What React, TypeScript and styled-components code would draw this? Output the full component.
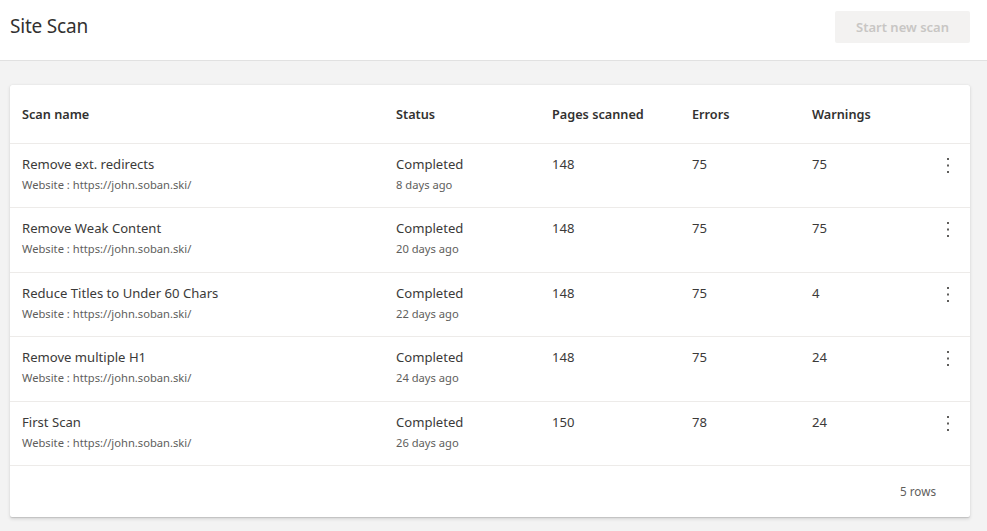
import React from 'react';
import styled, { createGlobalStyle } from 'styled-components';

const GlobalStyle = createGlobalStyle`
    html, body {
        margin: 0;
        padding: 0;
        background: #f3f3f3;
        font-family: "Noto Sans", "Open Sans", sans-serif;
        color: #323130;
    }
`;

const Page = styled.div`
    width: 987px;
    height: 531px;
    display: flex;
    flex-direction: column;
    background: #f3f3f3;
    overflow: hidden;
`;

const TopBar = styled.header`
    height: 61px;
    box-sizing: border-box;
    display: flex;
    align-items: center;
    justify-content: space-between;
    padding: 0 17px 0 10px;
    background: #ffffff;
    border-bottom: 1px solid #e1e1e1;
`;

const Title = styled.h1`
    margin: 0 0 8px;
    font-size: 19px;
    font-weight: 400;
    color: #323130;
    letter-spacing: -0.2px;
`;

const PrimaryButton = styled.button`
    width: 135px;
    height: 32px;
    margin-bottom: 6px;
    border: none;
    border-radius: 2px;
    background: #f3f2f1;
    color: #c8c6c4;
    font-family: inherit;
    font-size: 13px;
    font-weight: 600;
    cursor: default;
`;

const Body = styled.main`
    flex: 1;
    padding: 24px 17px 0 10px;
`;

const Card = styled.section`
    background: #ffffff;
    border-radius: 2px;
    box-shadow: 0 1.6px 3.6px rgba(0, 0, 0, 0.13), 0 0.3px 0.9px rgba(0, 0, 0, 0.11);
`;

const Row = styled.div<{ $header?: boolean }>`
    display: grid;
    grid-template-columns: 374px 156px 140px 120px 1fr 44px;
    height: ${p => (p.$header ? '59px' : '64.4px')};
    box-sizing: border-box;
    padding-left: 12px;
    align-items: ${p => (p.$header ? 'center' : 'start')};
    border-bottom: 1px solid #edebe9;
`;

const HeadCell = styled.div`
    font-size: 12.7px;
    font-weight: 600;
    color: #323130;
`;

const Cell = styled.div`
    padding-top: 11px;
    font-size: 13.1px;
    line-height: 19px;
    color: #3b3a39;
`;

const Sub = styled.div`
    font-size: 11.2px;
    line-height: 21px;
    color: #605e5c;
`;

const Kebab = styled.button`
    justify-self: center;
    margin-top: 9px;
    width: 20px;
    height: 24px;
    border: none;
    background: transparent;
    display: flex;
    align-items: center;
    justify-content: center;
    padding: 0;
    color: #605e5c;
`;

const Footer = styled.div`
    height: 51px;
    display: flex;
    align-items: center;
    justify-content: flex-end;
    padding-right: 34px;
    font-size: 11.7px;
    color: #605e5c;
`;

interface Scan {
    name: string;
    site: string;
    status: string;
    when: string;
    pages: number;
    errors: number;
    warnings: number;
}

const scans: Scan[] = [
    { name: 'Remove ext. redirects', site: 'https://john.soban.ski/', status: 'Completed', when: '8 days ago', pages: 148, errors: 75, warnings: 75 },
    { name: 'Remove Weak Content', site: 'https://john.soban.ski/', status: 'Completed', when: '20 days ago', pages: 148, errors: 75, warnings: 75 },
    { name: 'Reduce Titles to Under 60 Chars', site: 'https://john.soban.ski/', status: 'Completed', when: '22 days ago', pages: 148, errors: 75, warnings: 4 },
    { name: 'Remove multiple H1', site: 'https://john.soban.ski/', status: 'Completed', when: '24 days ago', pages: 148, errors: 75, warnings: 24 },
    { name: 'First Scan', site: 'https://john.soban.ski/', status: 'Completed', when: '26 days ago', pages: 150, errors: 78, warnings: 24 }
];

const MoreIcon = () => (
    <svg width="4" height="16" viewBox="0 0 4 16" fill="currentColor">
        <rect x="1" y="1" width="2" height="2" />
        <rect x="1" y="7.5" width="2" height="2" />
        <rect x="1" y="14" width="2" height="2" />
    </svg>
);

export default function App() {
    return (
        <Page>
            <GlobalStyle />
            <TopBar>
                <Title>Site Scan</Title>
                <PrimaryButton disabled>Start new scan</PrimaryButton>
            </TopBar>
            <Body>
                <Card>
                    <Row $header>
                        <HeadCell>Scan name</HeadCell>
                        <HeadCell>Status</HeadCell>
                        <HeadCell>Pages scanned</HeadCell>
                        <HeadCell>Errors</HeadCell>
                        <HeadCell>Warnings</HeadCell>
                        <div />
                    </Row>
                    {scans.map((s, i) => (
                        <Row key={i}>
                            <Cell>
                                {s.name}
                                <Sub>Website : {s.site}</Sub>
                            </Cell>
                            <Cell>
                                {s.status}
                                <Sub>{s.when}</Sub>
                            </Cell>
                            <Cell>{s.pages}</Cell>
                            <Cell>{s.errors}</Cell>
                            <Cell>{s.warnings}</Cell>
                            <Kebab aria-label="More actions"><MoreIcon /></Kebab>
                        </Row>
                    ))}
                    <Footer>5 rows</Footer>
                </Card>
            </Body>
        </Page>
    );
}
